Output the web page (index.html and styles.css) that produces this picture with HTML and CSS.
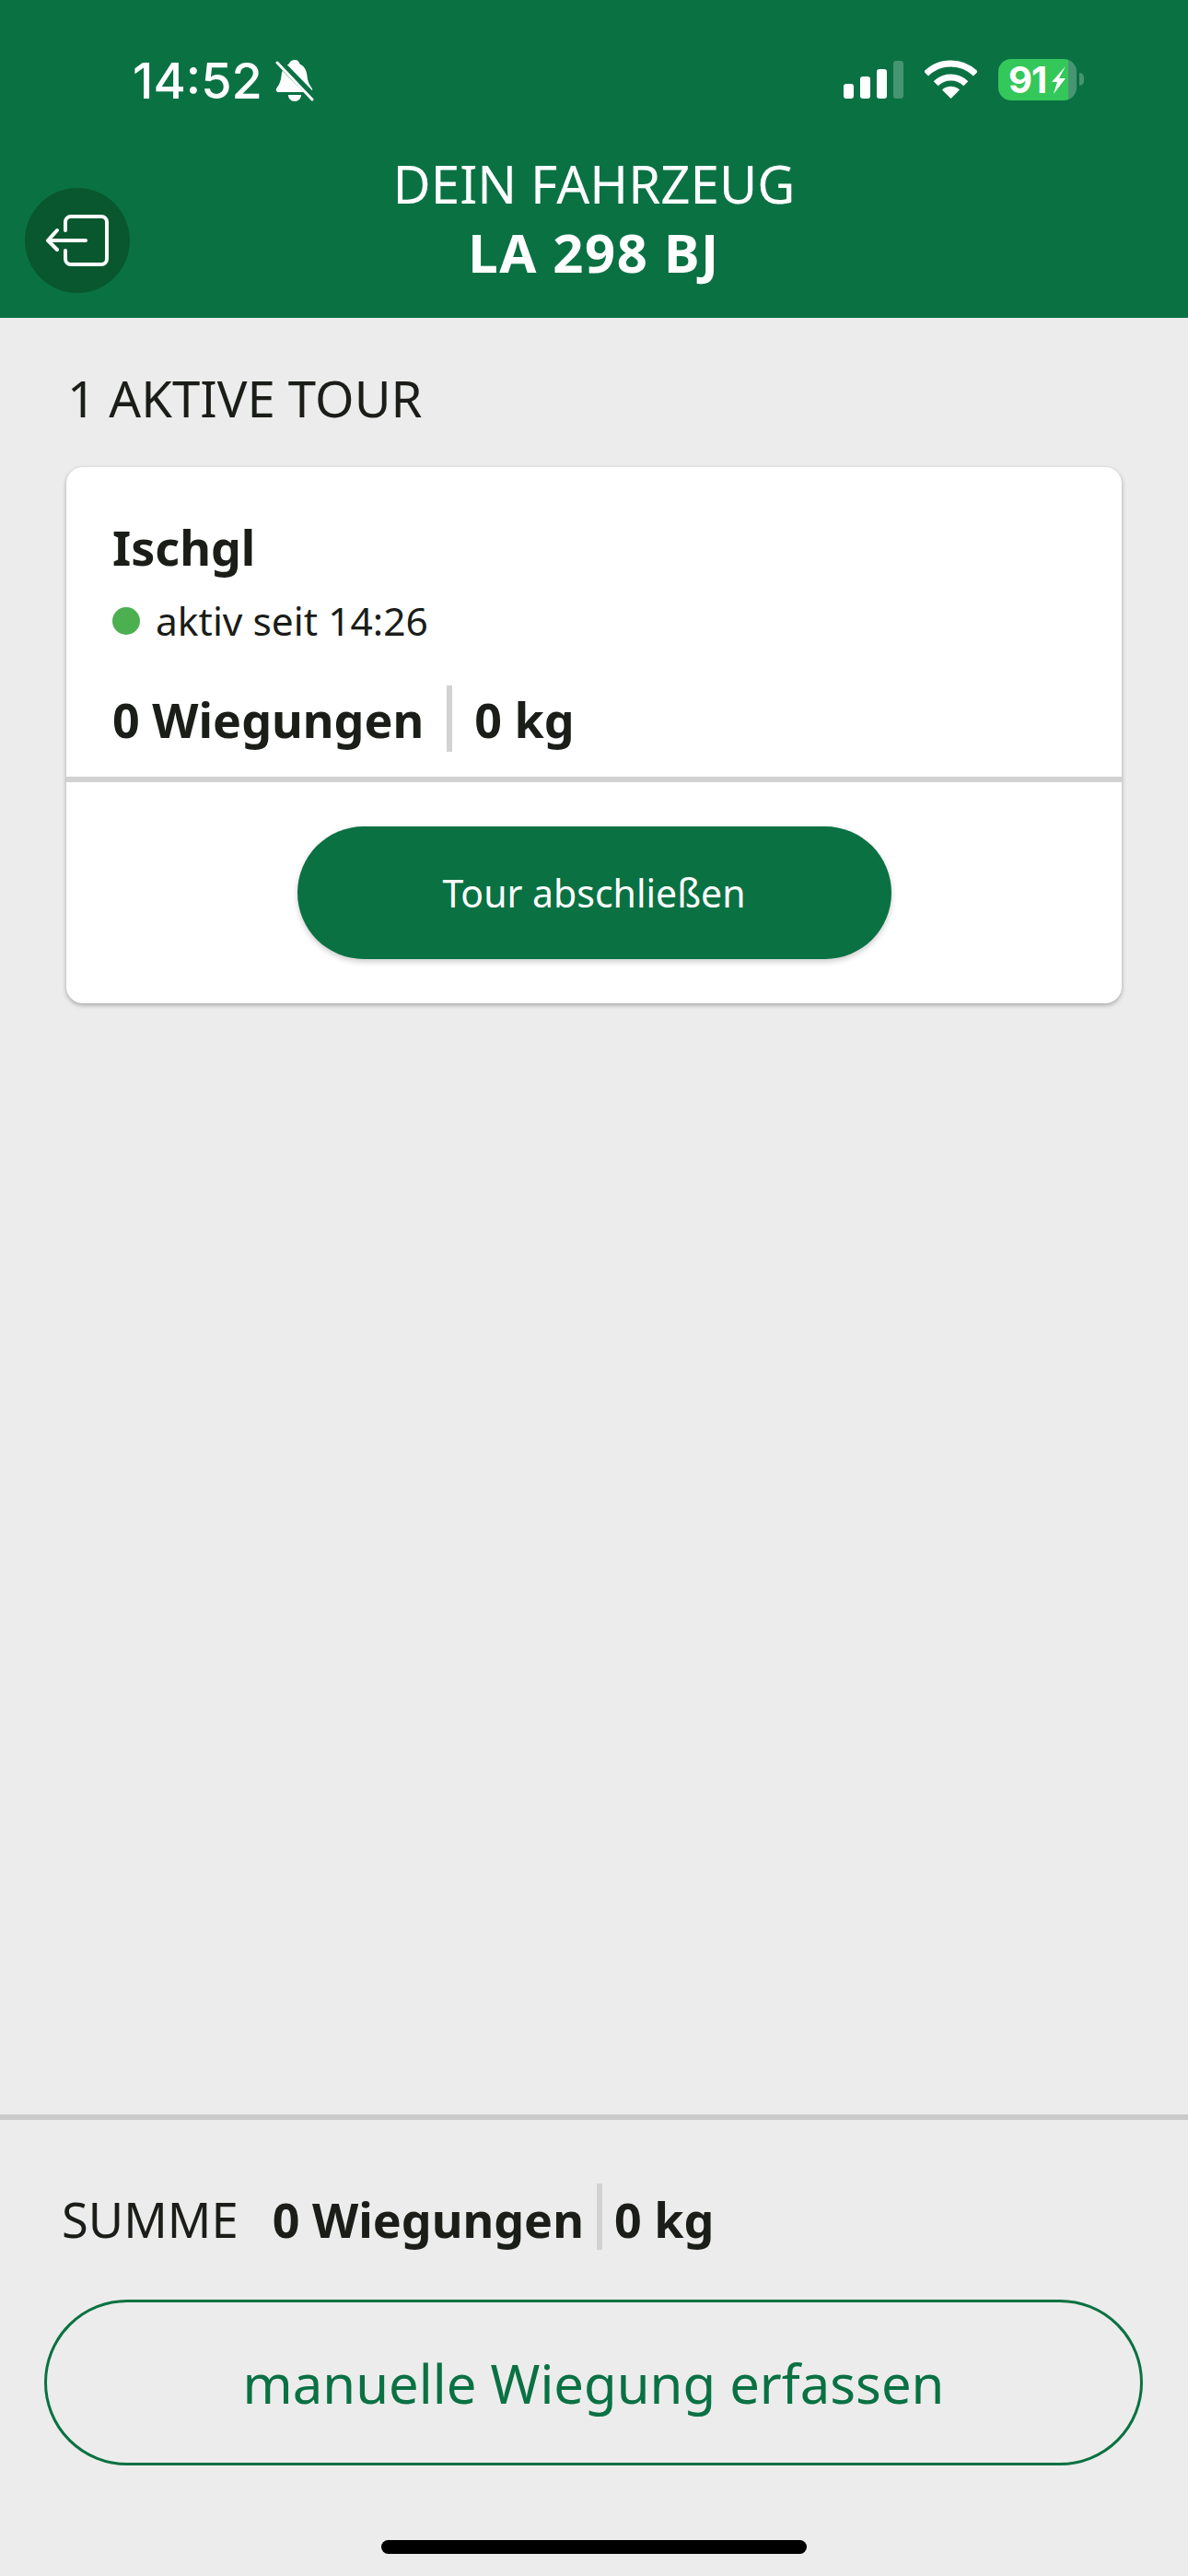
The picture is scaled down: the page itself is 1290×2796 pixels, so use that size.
FILE: index.html
```html
<!DOCTYPE html>
<html lang="de">
<head>
    <meta charset="UTF-8">
    <meta name="viewport" content="width=device-width, initial-scale=1.0">
    <title>Dein Fahrzeug</title>
    <link rel="stylesheet" href="styles.css">
</head>
<body>
    <div class="app">
        <header class="header">
            <div class="status-bar">
                <div class="status-left">
                    <span class="time">14:52</span>
                    <svg class="bell" viewBox="0 0 42 46">
                        <path fill="#fff" d="M21 0c3 0 5 2 5.500 4.500c5 2 7.500 7 8 13c.4 5 2 9 5 13c1.500 2 .5 4.500-1.500 4.500H3c-2 0-3-2.500-1.500-4.500c3-4 4.500-8 5-13c.5-6 3-11 8-13C15.500 2 18 0 21 0z"/>
                        <path fill="#fff" d="M14 38h14c0 4-3 7-7 7s-7-3-7-7z"/>
                        <path stroke="#0a7143" stroke-width="8" d="M2 0L42 41"/>
                        <path stroke="#fff" stroke-width="3" stroke-linecap="round" d="M2 3L40 43"/>
                    </svg>
                </div>
                <div class="status-right">
                    <svg class="signal" viewBox="0 0 65 41">
                        <rect x="0" y="25" width="11" height="16" rx="3" fill="#fff"/>
                        <rect x="18" y="17" width="11" height="24" rx="3" fill="#fff"/>
                        <rect x="36" y="9" width="11" height="32" rx="3" fill="#fff"/>
                        <rect x="54" y="0" width="11" height="41" rx="3" fill="#fff" opacity="0.25"/>
                    </svg>
                    <svg class="wifi" viewBox="0 0 57 42">
                        <path fill="none" stroke="#fff" stroke-width="7" d="M1.600 15.100A38 38 0 0 1 55.400 15.100"/>
                        <path fill="none" stroke="#fff" stroke-width="7" d="M12.200 25.700A23 23 0 0 1 44.800 25.700"/>
                        <path fill="#fff" d="M28.500 42L19 32.500A14 14 0 0 1 38 32.500z"/>
                    </svg>
                    <div class="battery">
                        <span class="battery-level">91</span>
                        <svg class="bolt" viewBox="0 0 16 30">
                            <path fill="#fff" d="M16 0L1 17h6L3 30l13-17H9z"/>
                        </svg>
                    </div>
                </div>
            </div>
            <div class="title-row">
                <button class="back-button">
                    <svg viewBox="0 0 70 56" class="back-icon">
                        <path fill="none" stroke="#fff" stroke-width="4" stroke-linecap="round" d="M22 17V8a6 6 0 0 1 6-6h33a6 6 0 0 1 6 6v40a6 6 0 0 1-6 6H28a6 6 0 0 1-6-6v-9"/>
                        <path fill="none" stroke="#fff" stroke-width="4" stroke-linecap="round" stroke-linejoin="round" d="M44 28H3M13 17L3 28L13 38"/>
                    </svg>
                </button>
                <div class="title">
                    <div class="title-top">DEIN FAHRZEUG</div>
                    <div class="title-plate">LA 298 BJ</div>
                </div>
            </div>
        </header>

        <main class="content">
            <h2 class="section-title">1 AKTIVE TOUR</h2>
            <div class="card">
                <div class="card-body">
                    <div class="tour-name">Ischgl</div>
                    <div class="tour-state"><span class="dot"></span>aktiv seit 14:26</div>
                    <div class="totals">
                        <span class="count">0 Wiegungen</span>
                        <span class="sep"></span>
                        <span class="weight">0 kg</span>
                    </div>
                </div>
                <div class="card-actions">
                    <button class="finish-button">Tour abschließen</button>
                </div>
            </div>
        </main>

        <footer class="footer">
            <div class="sum-row">
                <span class="sum-label">SUMME</span>
                <span class="count">0 Wiegungen</span>
                <span class="sep"></span>
                <span class="weight">0 kg</span>
            </div>
            <button class="manual-button">manuelle Wiegung erfassen</button>
            <div class="home-bar"></div>
        </footer>
    </div>
</body>
</html>
```

FILE: styles.css
```css
* {
    box-sizing: border-box;
}

html, body {
    margin: 0;
    padding: 0;
}

body {
    font-family: "Noto Sans", "Open Sans", sans-serif;
    background: #ececec;
    color: #1a1d18;
}

button {
    font-family: inherit;
    cursor: pointer;
}

.app {
    width: 1290px;
    height: 2796px;
    display: flex;
    flex-direction: column;
    overflow: hidden;
}

/* header */
.header {
    height: 345px;
    background: #0a7143;
    color: #fff;
    flex: none;
}

.status-bar {
    height: 116px;
    padding: 64px 121px 0 144px;
    display: flex;
    justify-content: space-between;
    align-items: flex-start;
}

.status-left {
    display: flex;
    align-items: center;
    gap: 14px;
}

.time {
    font-family: Inter, sans-serif;
    font-size: 54px;
    line-height: 48px;
    font-weight: 500;
}

.bell {
    width: 42px;
    height: 46px;
}

.status-right {
    display: flex;
    align-items: flex-start;
}

.signal {
    width: 65px;
    height: 41px;
    margin-top: 2px;
}

.wifi {
    width: 57px;
    height: 42px;
    margin: 1px 23px 0 23px;
}

.battery {
    position: relative;
    width: 85px;
    height: 45px;
    border-radius: 14px;
    background: linear-gradient(to right, #34c759 89%, rgba(255, 255, 255, 0.25) 89%);
    display: flex;
    align-items: center;
    padding-left: 11px;
    font-family: Inter, sans-serif;
    font-size: 40px;
    font-weight: 700;
    letter-spacing: -1px;
}

.battery::after {
    content: "";
    position: absolute;
    left: 88px;
    top: 15px;
    width: 5px;
    height: 14px;
    border-radius: 0 5px 5px 0;
    background: rgba(255, 255, 255, 0.25);
}

.battery-level {
    line-height: 45px;
}

.bolt {
    width: 16px;
    height: 30px;
    margin-left: 5px;
}

.title-row {
    display: grid;
    grid-template-columns: 141px 1fr 141px;
}

.back-button {
    width: 114px;
    height: 114px;
    margin: 88px 0 0 27px;
    padding: 0;
    border: none;
    border-radius: 50%;
    background: #09572e;
    display: flex;
    align-items: center;
    justify-content: center;
}

.back-icon {
    width: 70px;
    height: 56px;
}

.title {
    text-align: center;
    padding-top: 47px;
}

.title-top {
    font-size: 56.500px;
    line-height: 74px;
    font-weight: 380;
}

.title-plate {
    font-size: 58px;
    line-height: 74px;
    font-weight: 700;
    letter-spacing: 1.5px;
}

/* tour list */
.content {
    flex: 1;
    padding: 0 72px;
}

.section-title {
    margin: 0;
    padding: 52px 0 0 1px;
    height: 162px;
    font-size: 54.500px;
    line-height: 70px;
    font-weight: 380;
}

.card {
    background: #fff;
    border-radius: 18px;
    box-shadow: 0 2px 5px rgba(0, 0, 0, 0.3);
    height: 582px;
}

.card-body {
    height: 342px;
    padding: 52px 0 0 50px;
    border-bottom: 6px solid #d2d2d2;
}

.tour-name {
    font-size: 52px;
    line-height: 70px;
    font-weight: 700;
}

.tour-state {
    display: flex;
    align-items: center;
    font-size: 42.500px;
    line-height: 60px;
    font-weight: 380;
    margin-top: 15px;
}

.dot {
    width: 30px;
    height: 30px;
    border-radius: 50%;
    background: #4caf50;
    margin-right: 17px;
}

.totals {
    display: flex;
    align-items: center;
    margin-top: 40px;
    height: 72px;
}

.count, .weight {
    font-size: 52px;
    font-weight: 700;
}

.sep {
    width: 6px;
    height: 72px;
    background: #d2d2d2;
}

.totals .sep {
    margin: 0 24px 0 25px;
}

.card-actions {
    display: flex;
    justify-content: center;
    padding-top: 48px;
}

.finish-button {
    width: 645px;
    height: 144px;
    border: none;
    border-radius: 72px;
    background: #0a7143;
    color: #fff;
    font-size: 41px;
    font-weight: 380;
    box-shadow: 0 3px 6px rgba(0, 0, 0, 0.2);
}

/* bottom area */
.footer {
    flex: none;
    height: 501px;
    border-top: 6px solid #cbcbcb;
    padding: 69px 49px 0 48px;
}

.sum-row {
    display: flex;
    align-items: center;
    height: 72px;
    padding-left: 19px;
}

.sum-row span:not(.sep) {
    padding-top: 5px;
}

.sum-label {
    font-size: 52.500px;
    font-weight: 380;
    margin-right: 37px;
}

.sum-row .sep {
    margin: 0 13px 0 14px;
}

.manual-button {
    display: block;
    width: 100%;
    height: 180px;
    margin-top: 54px;
    border: 3px solid #0a7143;
    border-radius: 90px;
    background: transparent;
    color: #0a7143;
    font-size: 58px;
    font-weight: 380;
}

.home-bar {
    width: 462px;
    height: 15px;
    margin: 81px auto 0;
    border-radius: 8px;
    background: #000;
}
```
